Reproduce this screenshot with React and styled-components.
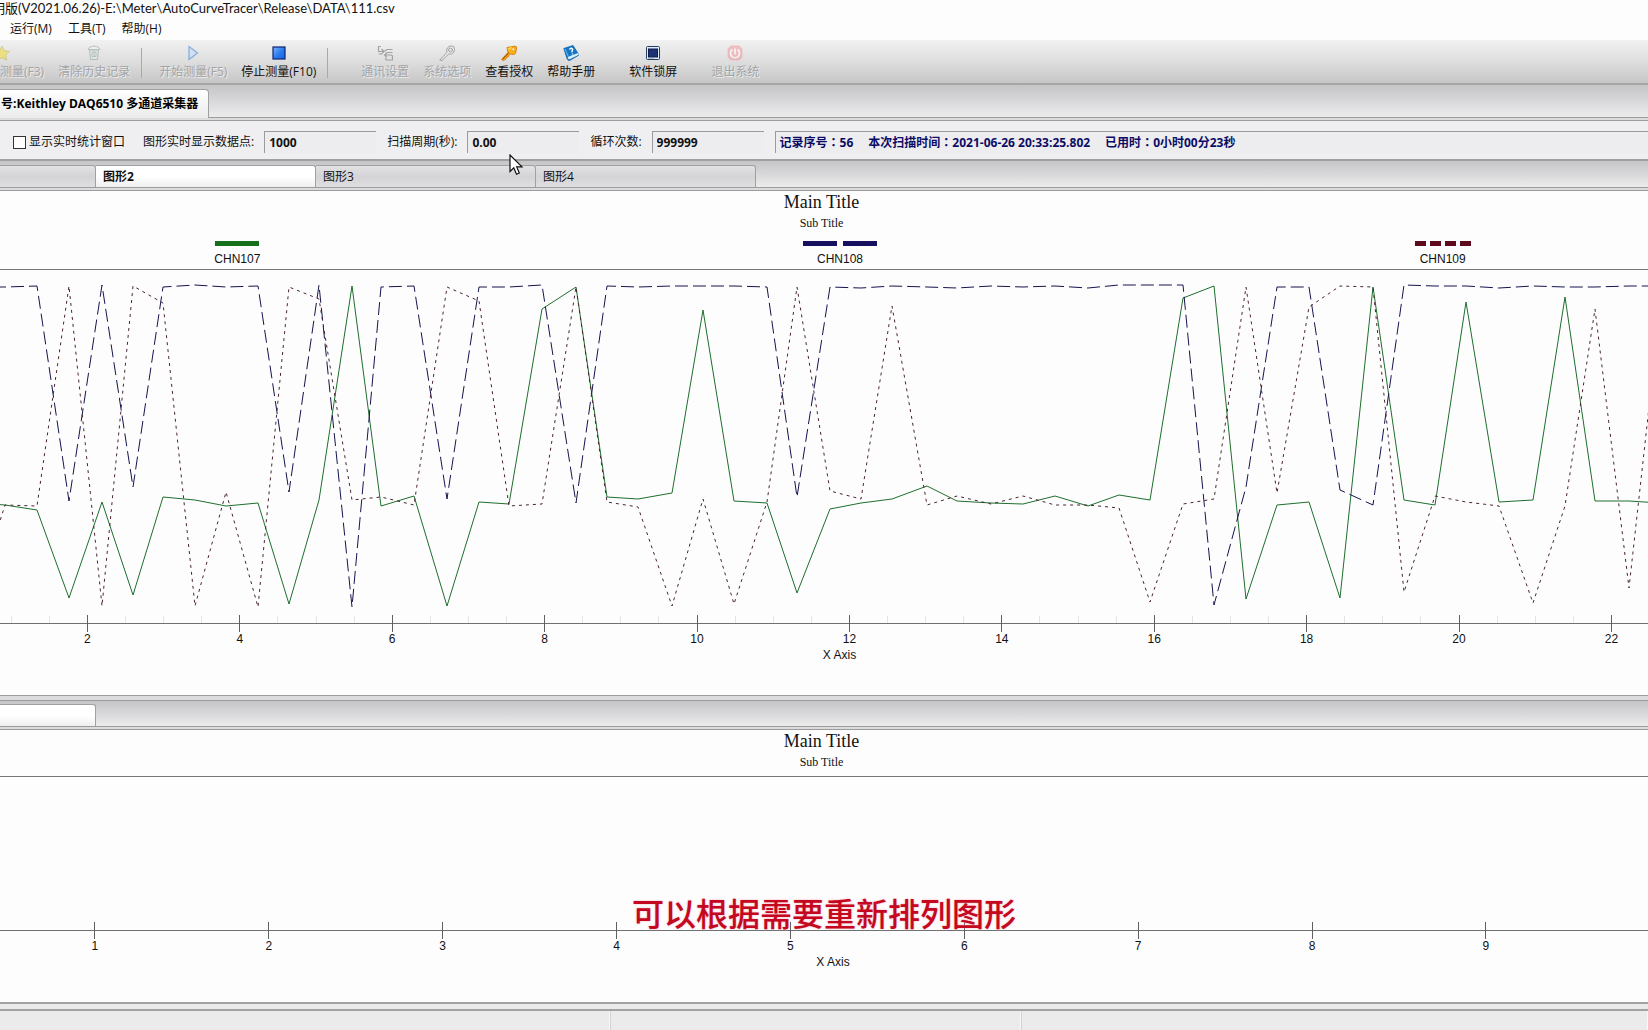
import React from 'react'
import styled, { createGlobalStyle, css } from 'styled-components'

const xs = [
    -25, 5, 37, 69, 102, 133, 163, 195, 226, 258, 289, 319, 352, 381, 414, 447, 479, 509, 542, 576, 607,
    638, 672, 703, 734, 767, 797, 830, 861, 892, 927, 957, 991, 1023, 1055, 1088, 1119, 1150, 1183,
    1214, 1246, 1277, 1309, 1340, 1373, 1404, 1435, 1466, 1499, 1533, 1565, 1595, 1629, 1660,
]

const series = [
    {
        name: 'CHN107',
        color: '#1e6e2c',
        swatch: '#15701c',
        dashes: 1,
        dashWidth: 44,
        gap: 0,
        ys: [
            233, 235, 240, 328, 232, 325, 227, 230, 236, 233, 334, 230, 16, 236, 226, 336, 232, 234, 39, 17, 227,
            229, 223, 40, 231, 233, 323, 239, 233, 229, 216, 231, 233, 234, 226, 236, 225, 230, 28,
            16, 329, 235, 232, 328, 17, 230, 235, 32, 232, 230, 27, 231, 231, 233,
        ],
    },
    {
        name: 'CHN108',
        color: '#14144e',
        swatch: '#16105e',
        dashes: 2,
        dashWidth: 34,
        gap: 6,
        dash: '13 5',
        ys: [
            17, 17, 16, 231, 15, 217, 17, 15, 17, 16, 222, 15, 337, 17, 16, 229, 17, 17, 15, 233, 16,
            17, 16, 16, 16, 17, 227, 17, 18, 16, 17, 18, 16, 17, 16, 18, 15, 15, 15,
            335, 217, 17, 17, 220, 235, 15, 16, 16, 18, 16, 17, 17, 16, 16,
        ],
    },
    {
        name: 'CHN109',
        color: '#4a2430',
        swatch: '#5c0a1c',
        dashes: 4,
        dashWidth: 11,
        gap: 4,
        dash: '3 4',
        ys: [
            330, 235, 236, 16, 336, 16, 33, 336, 222, 337, 17, 29, 230, 227, 235, 17, 31, 236, 234, 17, 232,
            237, 336, 229, 334, 232, 17, 221, 229, 36, 235, 226, 234, 226, 235, 235, 238, 332, 234,
            229, 17, 223, 37, 16, 17, 322, 226, 232, 236, 333, 236, 39, 318, 38,
        ],
    },
]

const toPoints = (ys) => xs.map((x, i) => `${x},${ys[i]}`).join(' ')

const range = (from, to, step) => {
    const out = []
    for (let v = from; v <= to; v += step) out.push(v)
    return out
}

const Icon = ({ children, faded }) => (
    <svg width="16" height="16" viewBox="0 0 16 16" opacity={faded ? 0.55 : 1} aria-hidden="true">
        {children}
    </svg>
)

const StarIcon = () => (
    <Icon faded>
        <path d="M8 1l2.2 4.8 5.3.6-4 3.6 1.2 5.2L8 12.6 3.3 15.2l1.2-5.2-4-3.6 5.3-.6z" fill="#f2dc2e" stroke="#c9b441" />
    </Icon>
)

const TrashIcon = () => (
    <Icon faded>
        <path d="M3.5 5h9l-1 9.5h-7z" fill="#dfe6e6" stroke="#8f9b9b" />
        <path d="M2 4.5l2-2.5 4-1 4 1 2 2.5z" fill="#eef5ee" stroke="#93a09c" />
        <path d="M6 7h4v4.5H6zM8 7v4.5" fill="none" stroke="#8aa6a0" />
    </Icon>
)

const PlayIcon = () => (
    <Icon faded>
        <path d="M4 1.5v13L12.5 8z" fill="#c4dcfa" stroke="#3d7fd8" strokeWidth="1.3" />
    </Icon>
)

const StopIcon = () => (
    <Icon>
        <defs>
            <linearGradient id="stopFill" x1="0" y1="0" x2="1" y2="1">
                <stop offset="0" stopColor="#7db8fb" />
                <stop offset="0.5" stopColor="#2f7df0" />
                <stop offset="1" stopColor="#1560dc" />
            </linearGradient>
        </defs>
        <rect x="2" y="2" width="12" height="12" fill="url(#stopFill)" stroke="#0a2472" strokeWidth="1.2" />
    </Icon>
)

const LinkIcon = () => (
    <Icon faded>
        <path d="M1 1.5h3M1.5 1v5.5h5M4.5 4L7 6.5 4.5 9h-3M5 6h3l2-1.5h5.5" fill="none" stroke="#6d6d6d" strokeWidth="1.2" />
        <path d="M15.5 7.5H10L7.5 10l2.5 2.5M8 10h6l1.5 1v4h-6L8 13.5" fill="none" stroke="#6d6d6d" strokeWidth="1.2" />
    </Icon>
)

const WrenchIcon = () => (
    <Icon faded>
        <path d="M.8 15l7-7.5q-1-4 2-6 2.500-1.300 5 .2l.7 3q-.3 3.500-3 4.300-1.500.4-2.800-.1L3 15.500z" fill="#f4f4f4" stroke="#666" />
        <circle cx="11.5" cy="5" r="2" fill="#ddd" stroke="#666" />
    </Icon>
)

const KeyIcon = () => (
    <Icon>
        <path d="M6 2.5l8-1.300q2 .2 1.600 2L14.500 8q-.5 1.500-2 1.500l-3-.5L8 10l-.6 1.800-1.800.4L5 13.900l-2.500 1.600-2-1L7 7.500z" fill="#fbb414" stroke="#d9820c" />
        <path d="M1.5 14.300L8 7.600" stroke="#a8541c" strokeWidth="1.2" />
        <circle cx="12.3" cy="4.3" r="1.5" fill="#fff3c0" stroke="#d9820c" strokeWidth=".6" />
        <path d="M7 4l4-1.5" stroke="#ffe45c" strokeWidth="1.3" />
    </Icon>
)

const BookIcon = () => (
    <Icon>
        <path d="M.8 3.500L10 .5l6 9.500-9.500 5.500q-2 0-2.500-2z" fill="#1477c6" stroke="#0c5ea4" strokeWidth=".8" />
        <path d="M4.500 13.500q.2-1.500 2-2.200l8.700-3.300.6 1.800-9.200 4.400z" fill="#d8effb" />
        <path d="M2 4l3.500 8" stroke="#6cc0ee" />
        <path d="M6.500 4.600q.7-1.800 2.300-1.300 1.500.8.3 2.300L9 7.200M9.500 8.600v.9" fill="none" stroke="#fff" strokeWidth="1.4" />
    </Icon>
)

const ScreenIcon = () => (
    <Icon>
        <rect x="1.5" y="1.5" width="13" height="13" rx="1" fill="#dcecfa" stroke="#2a3c60" />
        <rect x="3.5" y="4" width="9" height="8" fill="#1d3272" stroke="#0e1c4a" />
        <path d="M3 13h6" stroke="#7d92b0" />
    </Icon>
)

const PowerIcon = () => (
    <Icon faded>
        <path d="M3.5 1h9L15 4v8l-2.5 3h-9L1 12V4z" fill="#f39a9e" stroke="#e88" strokeWidth=".6" />
        <path d="M5.5 4.500a4.500 4.500 0 1 0 5 0M8 3.500v6" fill="none" stroke="#fff" strokeWidth="1.7" />
    </Icon>
)

const Chart = ({ bleedLeft, bleedRight, width, domain, major, minor, axisY, height, lines }) => {
    const pct = (v) => `${(v / domain) * 100}%`
    return (
        <Plot $left={bleedLeft} $right={bleedRight}>
            <PlotSvg height={height} role="img" aria-label="X Axis">
                <svg x="0" y="0" width="100%" height={axisY} viewBox={`${-bleedLeft} 0 ${width} ${axisY}`} preserveAspectRatio="none">
                    {lines.map((s) => (
                        <polyline
                            key={s.name}
                            points={toPoints(s.ys)}
                            fill="none"
                            stroke={s.color}
                            strokeDasharray={s.dash}
                            vectorEffect="non-scaling-stroke"
                        />
                    ))}
                </svg>
                <g shapeRendering="crispEdges">
                    {minor.map((v) => (
                        <line key={v} x1={pct(v)} x2={pct(v)} y1={axisY - 7} y2={axisY} stroke="#e4e4e8" />
                    ))}
                    <line x1="0" x2="100%" y1={axisY + 0.5} y2={axisY + 0.5} stroke="#707070" />
                    {major.map((v) => (
                        <line key={v} x1={pct(v)} x2={pct(v)} y1={axisY - 8} y2={axisY + 9} stroke="#606060" />
                    ))}
                </g>
                {major.map((v) => (
                    <text key={v} x={pct(v)} y={axisY + 20} textAnchor="middle">{v}</text>
                ))}
                <text x="50%" y={axisY + 36} textAnchor="middle">X Axis</text>
            </PlotSvg>
        </Plot>
    )
}

const Field = ({ id, label, value }) => (
    <FieldGroup>
        <label htmlFor={id}>{label}</label>
        <FieldInput id={id} defaultValue={value} />
    </FieldGroup>
)

const ReadoutItem = ({ label, value }) => (
    <span>{label}<Colon>：</Colon>{value}</span>
)

const ToolItem = ({ icon, label, disabled, cut }) => (
    <ToolButton type="button" disabled={disabled} $cut={cut}>
        {icon}
        <span>{label}</span>
    </ToolButton>
)

const App = () => (
    <Page>
        <GlobalStyle />
        <TitleBar>明版(V2021.06.26)-E:\Meter\AutoCurveTracer\Release\DATA\111.csv</TitleBar>
        <MenuBar>
            <MenuButton type="button">运行(M)</MenuButton>
            <MenuButton type="button">工具(T)</MenuButton>
            <MenuButton type="button">帮助(H)</MenuButton>
        </MenuBar>

        <Toolbar>
            <ToolItem icon={<StarIcon />} label="测量(F3)" disabled cut />
            <ToolItem icon={<TrashIcon />} label="清除历史记录" disabled />
            <Separator />
            <ToolItem icon={<PlayIcon />} label="开始测量(F5)" disabled />
            <ToolItem icon={<StopIcon />} label="停止测量(F10)" />
            <Separator />
            <Spacer $size={16} />
            <ToolItem icon={<LinkIcon />} label="通讯设置" disabled />
            <ToolItem icon={<WrenchIcon />} label="系统选项" disabled />
            <ToolItem icon={<KeyIcon />} label="查看授权" />
            <ToolItem icon={<BookIcon />} label="帮助手册" />
            <Spacer $size={20} />
            <ToolItem icon={<ScreenIcon />} label="软件锁屏" />
            <Spacer $size={20} />
            <ToolItem icon={<PowerIcon />} label="退出系统" disabled />
        </Toolbar>

        <TabBand $height={32}>
            <DeviceTab type="button">号:Keithley DAQ6510 多通道采集器</DeviceTab>
        </TabBand>
        <Ledge $height={4} />

        <Settings>
            <CheckLabel>
                <CheckBox type="checkbox" />
                显示实时统计窗口
            </CheckLabel>
            <Field id="points" label="图形实时显示数据点:" value="1000" />
            <Field id="period" label="扫描周期(秒):" value="0.00" />
            <Field id="loops" label="循环次数:" value="999999" />
            <Readout>
                <ReadoutItem label="记录序号" value="56" />
                <ReadoutItem label="本次扫描时间" value="2021-06-26 20:33:25.802" />
                <ReadoutItem label="已用时" value="0小时00分23秒" />
            </Readout>
        </Settings>

        <TabBand $height={26}>
            <ChartTab type="button" $first aria-label="图形1" />
            <ChartTab type="button" $active>图形2</ChartTab>
            <ChartTab type="button">图形3</ChartTab>
            <ChartTab type="button">图形4</ChartTab>
        </TabBand>
        <Ledge $height={4} />

        <Panel>
            <MainTitle>Main Title</MainTitle>
            <SubTitle>Sub Title</SubTitle>
            <Legend>
                {series.map((s) => (
                    <LegendItem key={s.name}>
                        <Swatch $gap={s.gap}>
                            {range(1, s.dashes, 1).map((n) => (
                                <Dash key={n} $width={s.dashWidth} $color={s.swatch} />
                            ))}
                        </Swatch>
                        {s.name}
                    </LegendItem>
                ))}
            </Legend>
            <Chart
                bleedLeft={65}
                bleedRight={96}
                width={1809}
                domain={23.74}
                major={range(2, 22, 2)}
                minor={range(1, 23, 0.5).filter((v) => v % 2 !== 0)}
                axisY={353}
                height={425}
                lines={series}
            />
        </Panel>

        <Ledge $height={6} />
        <TabBand $height={25}>
            <ChartTab type="button" $first $active aria-label="图形" />
        </TabBand>
        <Ledge $height={4} />

        <Panel>
            <MainTitle>Main Title</MainTitle>
            <SubTitle>Sub Title</SubTitle>
            <HeaderGap />
            <Chart
                bleedLeft={79}
                bleedRight={97}
                width={1824}
                domain={10.49}
                major={range(1, 9, 1)}
                minor={[]}
                axisY={153}
                height={225}
                lines={[]}
            />
            <Caption>可以根据需要重新排列图形</Caption>
        </Panel>

        <StatusLedge />
        <StatusBar>
            <StatusCell $share={611} />
            <StatusCell $share={410} />
            <StatusCell $share={627} />
        </StatusBar>

        <Pointer width="14" height="22" viewBox="0 0 14 22" aria-hidden="true">
            <path d="M1 1v16.500l3.800-3.600 2.700 6.300 2.800-1.200-2.600-6.100H13z" fill="#fff" stroke="#111" strokeWidth="1.2" />
        </Pointer>
    </Page>
)

export default App


const GlobalStyle = createGlobalStyle`
    body {
        margin: 0;
        background: #ebebec;
    }
    *, *::before, *::after {
        box-sizing: border-box;
    }
    button, input {
        font: inherit;
        color: inherit;
        margin: 0;
        border: 0;
        padding: 0;
        background: none;
    }
`

const Page = styled.div`
    position: relative;
    display: flex;
    flex-direction: column;
    min-height: 100vh;
    overflow: hidden;
    font: 12px/16px "Open Sans", "Noto Sans CJK SC", sans-serif;
    color: #111;
    white-space: nowrap;
`

/* the window runs off the left side of the screen */
const cutLeft = css`
    margin-left: -8px;
`

const TitleBar = styled.header`
    ${cutLeft}
    height: 16px;
    background: #fdfdfd;
    font: 13px/16px Lato, "Noto Sans CJK SC", sans-serif;
`

const MenuBar = styled.nav`
    ${cutLeft}
    display: flex;
    gap: 16px;
    height: 24px;
    padding-left: 18px;
    background: #fdfdfd;
`

const MenuButton = styled.button`
    line-height: 26px;
`

const Toolbar = styled.div`
    ${cutLeft}
    display: flex;
    align-items: flex-start;
    padding: 5px 0 3px;
    border-bottom: 2px solid #a6a6a7;
    background: linear-gradient(#f1f1f1, #dededf 50%, #c6c6c7);
`

const ToolButton = styled.button`
    display: flex;
    flex-direction: column;
    align-items: ${props => props.$cut ? 'flex-start' : 'center'};
    gap: 3px;
    padding: 0 7px 0 ${props => props.$cut ? '8px' : '7px'};

    svg {
        margin-left: ${props => props.$cut ? '-6px' : '0'};
    }

    &:disabled {
        color: #a4a4a5;
        text-shadow: 1px 1px 0 #ececec;
    }
`

const Separator = styled.div`
    width: 1px;
    height: 30px;
    margin: 3px 10px 0 4px;
    background: #a9a9ab;
`

const Spacer = styled.div`
    width: ${props => props.$size}px;
`

const TabBand = styled.div`
    ${cutLeft}
    display: flex;
    align-items: flex-end;
    height: ${props => props.$height}px;
    background: linear-gradient(#c5c5c7, #dcdcde 60%, #ececed);
`

const DeviceTab = styled.button`
    position: relative;
    height: 29px;
    margin-bottom: -1px;
    padding: 0 10px 1px 8px;
    border: 1px solid #a0a0a3;
    border-bottom: 0;
    border-radius: 0 4px 0 0;
    background: linear-gradient(#fff, #ebebec);
    font-weight: 700;
    color: #000;
`

const ChartTab = styled.button`
    width: ${props => props.$first ? 104 : 220}px;
    height: 22px;
    padding: 0 7px;
    border: 1px solid #a0a0a3;
    border-width: 1px 1px 0 0;
    border-radius: 0 3px 0 0;
    background: ${props => props.$active ? 'linear-gradient(#fff 50%, #efeff0)' : 'linear-gradient(#e2e2e4, #d4d4d6 50%, #dfdfe2)'};
    font-weight: ${props => props.$active ? 700 : 400};
    text-align: left;
`

const Ledge = styled.div`
    height: ${props => props.$height}px;
    border: 1px solid #9c9c9e;
    border-width: 1px 0;
    background: #dcdcdd;
`

const Settings = styled.form`
    ${cutLeft}
    display: flex;
    align-items: center;
    gap: 11px;
    padding: 10px 0 6px 21px;
    border-bottom: 2px solid #a0a0a1;
    background: #efeff1;
`

const CheckLabel = styled.label`
    display: flex;
    align-items: center;
    gap: 3px;
    padding-right: 7px;
`

const CheckBox = styled.input`
    appearance: none;
    width: 13px;
    height: 13px;
    border: 1px solid #333;
    background: #fff;
`

const FieldGroup = styled.div`
    display: flex;
    align-items: center;
    gap: 10px;
`

const sunken = css`
    height: 22px;
    border: 1px solid #9b9b9d;
    border-width: 1px 0 0 1px;
    background: #ededef;
    line-height: 20px;
    font-weight: 700;
`

const FieldInput = styled.input`
    ${sunken}
    width: 112px;
    padding: 0 4px;
`

const Readout = styled.output`
    ${sunken}
    display: flex;
    flex: 1;
    gap: 15px;
    padding: 0 4px;
    color: #0c0c66;
`

/* centred full-width colon */
const Colon = styled.span`
    font-family: "Noto Sans CJK TC", sans-serif;
`

const Panel = styled.section`
    position: relative;
    background: #fdfdfe;
    overflow: hidden;
`

const MainTitle = styled.h1`
    margin: 0;
    padding-right: 5px;
    font: 400 18px/22px "Liberation Serif", serif;
    text-align: center;
`

const SubTitle = styled.h2`
    margin: 0;
    padding-right: 5px;
    font: 400 12px/20px "Liberation Serif", serif;
    text-align: center;
`

const HeaderGap = styled.div`
    height: 4px;
`

const Legend = styled.ul`
    display: grid;
    grid-template-columns: repeat(3, 1fr);
    height: 36px;
    margin: 0 -96px 0 -64px;
    padding: 8px 0 0;
    list-style: none;
    font: 12px/18px "Liberation Sans", sans-serif;
`

const LegendItem = styled.li`
    display: flex;
    flex-direction: column;
    align-items: center;
    gap: 4px;
`

const Swatch = styled.span`
    display: flex;
    gap: ${props => props.$gap}px;
`

const Dash = styled.span`
    width: ${props => props.$width}px;
    height: 5px;
    background: ${props => props.$color};
`

const Plot = styled.div`
    margin: 0 -${props => props.$right}px 0 -${props => props.$left}px;
    border-top: 1px solid #777;
`

const PlotSvg = styled.svg`
    display: block;
    width: 100%;
    font: 12px "Liberation Sans", sans-serif;
    fill: #111;
`

const Caption = styled.p`
    position: absolute;
    right: 0;
    bottom: 70px;
    left: 0;
    margin: 0;
    font: 500 32px/40px "Noto Sans CJK SC", sans-serif;
    color: #c40820;
    text-shadow: 0 0 2px #f3a0b4;
    text-align: center;
`

const StatusLedge = styled.div`
    height: 9px;
    border: 2px solid #a2a2a3;
    border-width: 2px 0;
    background: #eaeaea;
`

const StatusBar = styled.footer`
    display: flex;
    flex: 1;
    min-height: 19px;
    background: #ebebec;
`

const StatusCell = styled.div`
    flex: ${props => props.$share} 0 0;
    border-right: 1px solid #d2d2d4;
    box-shadow: inset -1px 0 0 #f8f8f8;

    &:last-child {
        border-right: 0;
    }
`

const Pointer = styled.svg`
    position: absolute;
    top: 154px;
    left: 509px;
`
